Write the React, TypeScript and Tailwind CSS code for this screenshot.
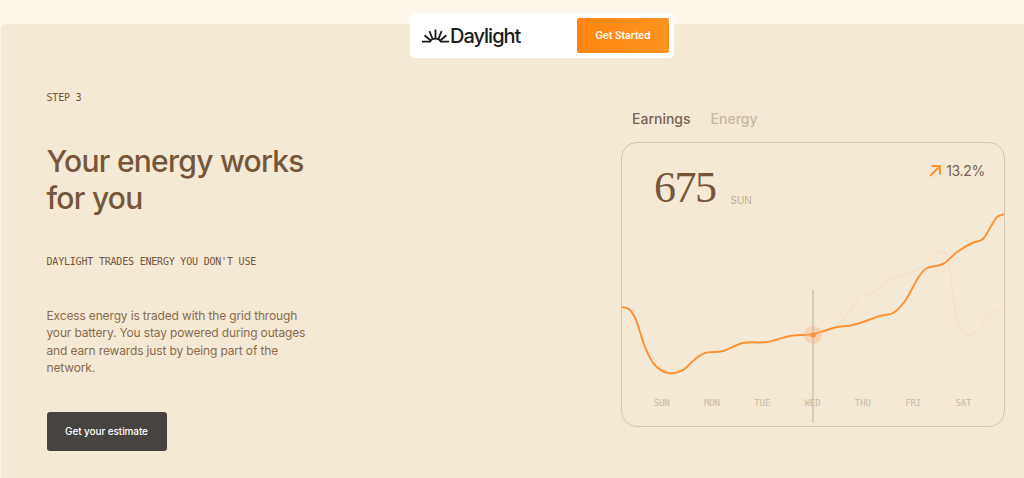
const earningsPoints: [number, number][] = [
  [0, 165], [8, 167], [15, 178], [24, 205], [33, 222], [47, 231], [62, 228], [72, 219], [84, 211], [102, 209], [122, 201],
  [146, 200], [169, 194], [192, 192], [216, 185], [232, 183], [259, 174], [272, 171], [284, 159],
  [297, 136], [306, 126], [322, 122], [336, 110], [351, 101], [362, 97], [370, 84], [376, 75], [384, 72],
];

const energyPoints: [number, number][] = [
  [216, 185], [228, 170], [239, 154], [252, 151], [269, 136], [282, 133], [296, 128], [306, 118], [319, 109],
  [326, 114], [330, 135], [336, 178], [346, 194], [359, 186], [372, 170], [384, 166],
];

// catmull-rom through the traced points
function smoothPath(points: [number, number][]) {
  let d = `M${points[0][0]} ${points[0][1]}`;
  for (let i = 0; i < points.length - 1; i++) {
    const p0 = points[Math.max(i - 1, 0)];
    const p1 = points[i];
    const p2 = points[i + 1];
    const p3 = points[Math.min(i + 2, points.length - 1)];
    const c1x = p1[0] + (p2[0] - p0[0]) / 6;
    const c1y = p1[1] + (p2[1] - p0[1]) / 6;
    const c2x = p2[0] - (p3[0] - p1[0]) / 6;
    const c2y = p2[1] - (p3[1] - p1[1]) / 6;
    d += ` C${c1x} ${c1y} ${c2x} ${c2y} ${p2[0]} ${p2[1]}`;
  }
  return d;
}

const days = ['SUN', 'MON', 'TUE', 'WED', 'THU', 'FRI', 'SAT'];

function SunMark() {
  return (
    <svg width="27" height="14" viewBox="0 0 27 14" fill="none" stroke="#1a1a1a" strokeWidth="1.8" className="shrink-0">
      <path d="M0 12.6H8.2C9 10.6 10.8 9.6 13.5 9.6C16.2 9.6 18 10.6 18.8 12.6H27" />
      <path d="M13.5 9.5V0.5" />
      <path d="M10.6 10L7.4 2.2" />
      <path d="M16.4 10L19.6 2.2" />
      <path d="M8.4 11.2L2.6 6.2" />
      <path d="M18.6 11.2L24.4 6.2" />
    </svg>
  );
}

function EarningsChart() {
  return (
    <div className="relative h-[285px] w-[384px] overflow-hidden rounded-[16px] border border-[#d3c6b4]">
      <div className="flex items-start justify-between pl-[32px] pr-[19px] pt-[17px]">
        <div className="flex items-end gap-[15px]">
          <span className="font-['Liberation_Serif',serif] text-[44px] leading-[56px] tracking-[-1.5px] text-[#75563a]">675</span>
          <span className="mb-[9px] font-['Inter',sans-serif] text-[10px] leading-[14px] text-[#bfae98]">SUN</span>
        </div>
        <div className="mt-[3px] flex items-center gap-[5px]">
          <svg width="12" height="12" viewBox="0 0 12 12" fill="none" stroke="#ff9233" strokeWidth="2">
            <path d="M1 11L11 1" />
            <path d="M2.5 1H11V9.5" />
          </svg>
          <span className="font-['Inter',sans-serif] text-[14px] leading-[16px] tracking-[-0.3px] text-[#75634f]">13.2%</span>
        </div>
      </div>

      <svg width="384" height="285" viewBox="0 0 384 285" fill="none" className="absolute left-[-1px] top-[-1px]">
        <path d={smoothPath(energyPoints)} stroke="#f6e2c6" strokeWidth="1.6" />
        <path d={smoothPath(earningsPoints)} stroke="#ff9233" strokeWidth="2" />
        <circle cx="192" cy="193" r="9" fill="#ffb27a" fillOpacity="0.4" />
        <circle cx="192" cy="193" r="2.6" fill="#ff8a2a" />
        <path d="M192 148V281" stroke="#bfb2a0" strokeWidth="1" />
      </svg>

      <div className="absolute bottom-[17px] left-[25px] flex gap-[21px]">
        {days.map((day) => (
          <span key={day} className="w-[29.3px] text-center font-['DejaVu_Sans_Mono',monospace] text-[9px] leading-[12px] tracking-[-0.1px] text-[#c8bba9]">
            {day}
          </span>
        ))}
      </div>
    </div>
  );
}

export default function App() {
  return (
    <div className="relative h-[478px] w-[1024px] overflow-hidden bg-[#fff7ea] pt-[24px]">
      <header className="absolute left-[410px] top-[13px] z-10 flex h-[45px] w-[264px] items-center justify-between rounded-[5px] bg-white pl-[12px] pr-[5px]">
        <div className="flex items-center gap-[1px]">
          <SunMark />
          <span className="font-['Inter',sans-serif] text-[20px] font-medium leading-[24px] tracking-[-1px] text-[#1a1a1a]">Daylight</span>
        </div>
        <button className="flex h-[35px] w-[92px] items-center justify-center rounded-[2px] bg-gradient-to-r from-[#ff8510] to-[#ff931f] font-['Inter',sans-serif] text-[10px] font-semibold text-white">
          Get Started
        </button>
      </header>

      <main className="flex h-[454px] justify-between rounded-tl-[6px] border-l border-[#fbf3e6] bg-[#f4e9d5] pl-[45.5px] pr-[19px]">
        <section className="w-[290px] pt-[68px]">
          <p className="font-['DejaVu_Sans_Mono',monospace] text-[10px] leading-[12px] tracking-[-0.2px] text-[#75563a]">STEP 3</p>
          <h1 className="mt-[39px] font-['Inter',sans-serif] text-[30px] font-medium leading-[37px] tracking-[-0.73px] text-[#75563a]">
            Your energy works for you
          </h1>
          <p className="mt-[39px] whitespace-nowrap font-['DejaVu_Sans_Mono',monospace] text-[10px] leading-[12px] tracking-[-0.2px] text-[#75563a]">
            DAYLIGHT TRADES ENERGY YOU DON'T USE
          </p>
          <p className="mt-[39px] w-[265px] font-['Inter',sans-serif] text-[12px] leading-[17.33px] tracking-[-0.15px] text-[#8a6b4c]">
            Excess energy is traded with the grid through your battery. You stay powered during outages and earn rewards just by being part of the network.
          </p>
          <button className="mt-[36px] flex h-[39px] w-[120px] items-center justify-center rounded-[3px] bg-[#464340] font-['Inter',sans-serif] text-[10px] font-medium tracking-[-0.1px] text-white">
            Get your estimate
          </button>
        </section>

        <section className="w-[384px] pt-[86px]">
          <div className="ml-[11px] flex gap-[20px] font-['Inter',sans-serif] text-[14px] font-medium leading-[18px]">
            <span className="text-[#75634f]">Earnings</span>
            <span className="text-[#c7b8a3]">Energy</span>
          </div>
          <div className="mt-[14px]">
            <EarningsChart />
          </div>
        </section>
      </main>
    </div>
  );
}
